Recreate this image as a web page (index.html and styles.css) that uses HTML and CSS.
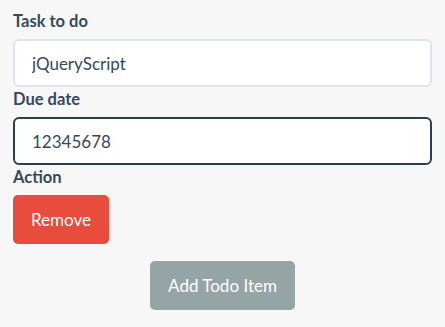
FILE: index.html
```html
<!DOCTYPE html>
<html lang="en">
<head>
	<meta charset="UTF-8">
	<title>Todo</title>
	<link rel="stylesheet" href="styles.css">
</head>
<body>
	<div class="todo-form">
		<label class="field-label">Task to do</label>
		<input class="field" type="text" value="jQueryScript">
		<label class="field-label">Due date</label>
		<input class="field field-focus" type="text" value="12345678">
		<label class="field-label">Action</label>
		<button class="btn btn-danger">Remove</button>
		<div class="actions">
			<button class="btn btn-default">Add Todo Item</button>
		</div>
	</div>
</body>
</html>
```

FILE: styles.css
```css
*{padding: 0;margin: 0;box-sizing: border-box;}
body{
	background: #f7f7f7;
	font-family: Lato, "Open Sans", sans-serif;
	color: #34495e;
}
.todo-form{
	padding: 9px 13px 0 13px;
}
.field-label{
	display: block;
	font-size: 16.5px;
	font-weight: bold;
	line-height: 24px;
	margin-bottom: 6px;
}
.field{
	display: block;
	width: 100%;
	height: 48px;
	padding: 0 17px;
	border: 2px solid #dde4ea;
	border-radius: 6px;
	background: #fff;
	font-family: Lato, "Open Sans", sans-serif;
	font-size: 17px;
	color: #34495e;
	outline: none;
}
.field-focus{
	border-color: #2c3e50;
}
.btn{
	display: block;
	height: 49px;
	padding: 0 18px;
	border: none;
	border-radius: 5px;
	color: #fff;
	font-family: Lato, "Open Sans", sans-serif;
	font-size: 17px;
}
.btn-danger{
	background: #e74c3c;
}
.btn-default{
	background: #95a5a6;
}
.actions{
	display: flex;
	justify-content: center;
	padding-top: 17px;
}
```
